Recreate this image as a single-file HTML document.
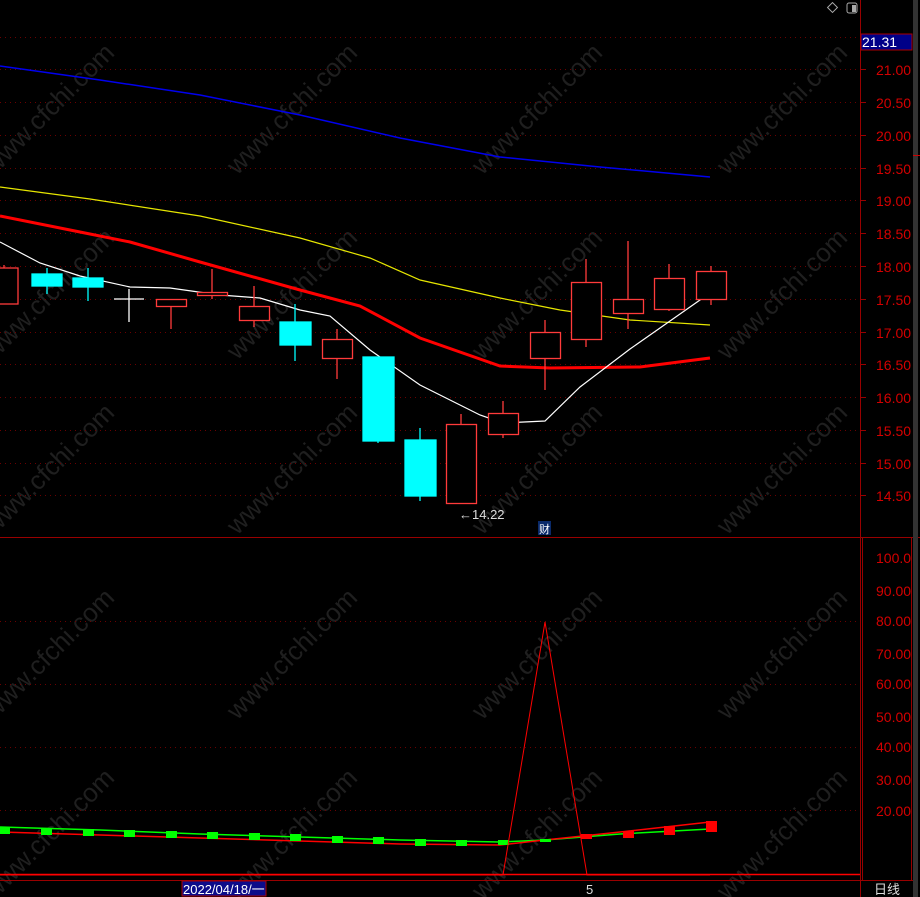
<!DOCTYPE html>
<html><head><meta charset="utf-8"><style>
html,body{margin:0;padding:0;background:#000;}
svg{display:block;font-family:"Liberation Sans","Noto Sans CJK SC",sans-serif;}
</style></head><body>
<svg width="920" height="897" viewBox="0 0 920 897" xmlns="http://www.w3.org/2000/svg">
<rect width="920" height="897" fill="#000"/>
<g fill="#1f1f1f" font-size="26" text-anchor="middle">
<text transform="translate(55,115) rotate(-45)">www.cfchi.com</text>
<text transform="translate(298,115) rotate(-45)">www.cfchi.com</text>
<text transform="translate(543,115) rotate(-45)">www.cfchi.com</text>
<text transform="translate(788,115) rotate(-45)">www.cfchi.com</text>
<text transform="translate(55,300) rotate(-45)">www.cfchi.com</text>
<text transform="translate(298,300) rotate(-45)">www.cfchi.com</text>
<text transform="translate(543,300) rotate(-45)">www.cfchi.com</text>
<text transform="translate(788,300) rotate(-45)">www.cfchi.com</text>
<text transform="translate(55,475) rotate(-45)">www.cfchi.com</text>
<text transform="translate(298,475) rotate(-45)">www.cfchi.com</text>
<text transform="translate(543,475) rotate(-45)">www.cfchi.com</text>
<text transform="translate(788,475) rotate(-45)">www.cfchi.com</text>
<text transform="translate(55,660) rotate(-45)">www.cfchi.com</text>
<text transform="translate(298,660) rotate(-45)">www.cfchi.com</text>
<text transform="translate(543,660) rotate(-45)">www.cfchi.com</text>
<text transform="translate(788,660) rotate(-45)">www.cfchi.com</text>
<text transform="translate(55,840) rotate(-45)">www.cfchi.com</text>
<text transform="translate(298,840) rotate(-45)">www.cfchi.com</text>
<text transform="translate(543,840) rotate(-45)">www.cfchi.com</text>
<text transform="translate(788,840) rotate(-45)">www.cfchi.com</text>
</g>
<g stroke="#6a0000" stroke-width="1" stroke-dasharray="1,4">
<line x1="0" y1="37.5" x2="860" y2="37.5"/>
<line x1="0" y1="69.5" x2="860" y2="69.5"/>
<line x1="0" y1="102.5" x2="860" y2="102.5"/>
<line x1="0" y1="135.5" x2="860" y2="135.5"/>
<line x1="0" y1="168.5" x2="860" y2="168.5"/>
<line x1="0" y1="200.5" x2="860" y2="200.5"/>
<line x1="0" y1="233.5" x2="860" y2="233.5"/>
<line x1="0" y1="266.5" x2="860" y2="266.5"/>
<line x1="0" y1="299.5" x2="860" y2="299.5"/>
<line x1="0" y1="332.5" x2="860" y2="332.5"/>
<line x1="0" y1="364.5" x2="860" y2="364.5"/>
<line x1="0" y1="397.5" x2="860" y2="397.5"/>
<line x1="0" y1="430.5" x2="860" y2="430.5"/>
<line x1="0" y1="463.5" x2="860" y2="463.5"/>
<line x1="0" y1="495.5" x2="860" y2="495.5"/>
<line x1="0" y1="621.5" x2="860" y2="621.5"/>
<line x1="0" y1="684.5" x2="860" y2="684.5"/>
<line x1="0" y1="747.5" x2="860" y2="747.5"/>
<line x1="0" y1="810.5" x2="860" y2="810.5"/>
</g>
<polyline fill="none" stroke="#0000ee" stroke-width="1.5" points="0,66 100,80 200,95 300,115 400,138 500,157 600,167 710,177"/>
<polyline fill="none" stroke="#e6e600" stroke-width="1.2" points="0,187 90,199 200,216 300,238 370,258 420,280 500,298 560,310 630,320 710,325"/>
<polyline fill="none" stroke="#ff0000" stroke-width="3" points="0,216 80,232 130,242 200,262 300,290 360,306 420,338 500,366 550,368 640,367 710,358"/>
<polyline fill="none" stroke="#ffffff" stroke-width="1.2" points="0,242 40,263 80,276 130,287 170,288 220,295 260,298 300,310 330,316 370,350 420,385 480,415 503,423 545,421 580,387 630,349 710,293"/>
<g stroke="#ff3b3b" stroke-width="1.3" fill="#000">
<line x1="4" y1="265" x2="4" y2="268"/><rect x="-2" y="268" width="20" height="36"/>
<line x1="171" y1="299" x2="171" y2="329"/><rect x="156.5" y="299.5" width="30" height="7"/>
<line x1="212" y1="269" x2="212" y2="299"/><rect x="197.5" y="292.5" width="30" height="3"/>
<line x1="254" y1="286" x2="254" y2="327"/><rect x="239.5" y="306.5" width="30" height="14"/>
<line x1="337" y1="329" x2="337" y2="379"/><rect x="322.5" y="339.5" width="30" height="19"/>
<line x1="461" y1="414" x2="461" y2="504"/><rect x="446.5" y="424.5" width="30" height="79"/>
<line x1="503" y1="401" x2="503" y2="438"/><rect x="488.5" y="413.5" width="30" height="21"/>
<line x1="545" y1="320" x2="545" y2="390"/><rect x="530.5" y="332.5" width="30" height="26"/>
<line x1="586" y1="259" x2="586" y2="347"/><rect x="571.5" y="282.5" width="30" height="57"/>
<line x1="628" y1="241" x2="628" y2="329"/><rect x="613.5" y="299.5" width="30" height="14"/>
<line x1="669" y1="264" x2="669" y2="311"/><rect x="654.5" y="278.5" width="30" height="31"/>
<line x1="711" y1="266" x2="711" y2="305"/><rect x="696.5" y="271.5" width="30" height="28"/>
</g>
<g stroke="#00ffff" stroke-width="1.3" fill="#00ffff">
<line x1="47" y1="268" x2="47" y2="294"/><rect x="32" y="274" width="30" height="12"/>
<line x1="88" y1="268" x2="88" y2="301"/><rect x="73" y="278" width="30" height="9"/>
<line x1="295" y1="304" x2="295" y2="361"/><rect x="280" y="322" width="31" height="23"/>
<line x1="378" y1="357" x2="378" y2="443"/><rect x="363" y="357" width="31" height="84"/>
<line x1="420" y1="428" x2="420" y2="501"/><rect x="405" y="440" width="31" height="56"/>
</g>
<g stroke="#fff" stroke-width="1.3"><line x1="114" y1="299" x2="144" y2="299"/><line x1="129" y1="289" x2="129" y2="322"/></g>
<text x="459" y="519" fill="#ddd" font-size="13">←14.22</text>
<rect x="538" y="521" width="13" height="14" fill="#0a2a6a"/>
<text x="539" y="533" fill="#fff" font-size="11">财</text>
<polyline fill="none" stroke="#00ff00" stroke-width="1.5" points="0,827 100,830 200,834 300,837 400,840 500,842 545,840 620,834 710,829"/>
<polyline fill="none" stroke="#ff0000" stroke-width="1.5" points="0,832 100,835 200,838 300,841 400,844 500,845 545,840 620,832 710,822"/>
<g fill="#00ff00">
<rect x="0" y="827" width="10" height="7"/><rect x="41" y="828" width="11" height="7"/><rect x="83" y="829" width="11" height="7"/><rect x="124" y="830" width="11" height="7"/><rect x="166" y="831" width="11" height="7"/><rect x="207" y="832" width="11" height="7"/><rect x="249" y="833" width="11" height="7"/><rect x="290" y="834" width="11" height="7"/><rect x="332" y="836" width="11" height="7"/><rect x="373" y="837" width="11" height="7"/><rect x="415" y="839" width="11" height="7"/><rect x="456" y="840" width="11" height="6"/><rect x="498" y="840" width="11" height="5"/><rect x="540" y="839" width="11" height="3"/>
</g>
<g fill="#ff0000">
<rect x="581" y="834" width="11" height="5"/><rect x="623" y="831" width="11" height="7"/><rect x="664" y="826" width="11" height="9"/><rect x="706" y="821" width="11" height="11"/>
</g>
<polyline fill="none" stroke="#ff0000" stroke-width="1" points="0,875 503,875 545,622 587,875 710,875"/>
<line x1="0" y1="874.5" x2="860" y2="874.5" stroke="#ff0000" stroke-width="1.5"/>
<line x1="0" y1="537.5" x2="920" y2="537.5" stroke="#990000"/>
<line x1="0" y1="880.5" x2="913" y2="880.5" stroke="#990000"/>
<line x1="860.5" y1="0" x2="860.5" y2="897" stroke="#990000"/>
<rect x="862.5" y="537.5" width="49" height="343" fill="none" stroke="#990000"/>
<rect x="913" y="0" width="5" height="897" fill="#333"/>
<line x1="913" y1="155.5" x2="920" y2="155.5" stroke="#cc0000"/>
<g stroke="#990000"><line x1="860" y1="69.5" x2="866" y2="69.5"/><line x1="860" y1="102.5" x2="866" y2="102.5"/><line x1="860" y1="135.5" x2="866" y2="135.5"/><line x1="860" y1="168.5" x2="866" y2="168.5"/><line x1="860" y1="200.5" x2="866" y2="200.5"/><line x1="860" y1="233.5" x2="866" y2="233.5"/><line x1="860" y1="266.5" x2="866" y2="266.5"/><line x1="860" y1="299.5" x2="866" y2="299.5"/><line x1="860" y1="332.5" x2="866" y2="332.5"/><line x1="860" y1="364.5" x2="866" y2="364.5"/><line x1="860" y1="397.5" x2="866" y2="397.5"/><line x1="860" y1="430.5" x2="866" y2="430.5"/><line x1="860" y1="463.5" x2="866" y2="463.5"/><line x1="860" y1="495.5" x2="866" y2="495.5"/></g>
<g fill="#d40000" font-size="14">
<text x="876" y="75">21.00</text><text x="876" y="108">20.50</text><text x="876" y="141">20.00</text><text x="876" y="174">19.50</text><text x="876" y="206">19.00</text><text x="876" y="239">18.50</text><text x="876" y="272">18.00</text><text x="876" y="305">17.50</text><text x="876" y="338">17.00</text><text x="876" y="370">16.50</text><text x="876" y="403">16.00</text><text x="876" y="436">15.50</text><text x="876" y="469">15.00</text><text x="876" y="501">14.50</text>
<text x="876" y="563">100.0</text><text x="876" y="596">90.00</text><text x="876" y="626">80.00</text><text x="876" y="659">70.00</text><text x="876" y="689">60.00</text><text x="876" y="722">50.00</text><text x="876" y="752">40.00</text><text x="876" y="785">30.00</text><text x="876" y="816">20.00</text>
</g>
<rect x="861" y="34" width="51" height="16" fill="#000088" stroke="#aa0000"/>
<text x="862" y="47" fill="#fff" font-size="14">21.31</text>
<rect x="829" y="4" width="7" height="7" fill="none" stroke="#aaa" transform="rotate(45 832.5 7.5)"/>
<rect x="847" y="3" width="10" height="10" rx="2" fill="none" stroke="#aaa"/><rect x="852" y="5" width="4" height="7" fill="#aaa"/>
<rect x="182" y="881" width="84" height="15" fill="#0c0c8a" stroke="#aa0000"/>
<text x="183" y="894" fill="#fff" font-size="13">2022/04/18/一</text>
<text x="586" y="894" fill="#ddd" font-size="13">5</text>
<text x="874" y="894" fill="#ddd" font-size="13">日线</text>
</svg>
</body></html>
